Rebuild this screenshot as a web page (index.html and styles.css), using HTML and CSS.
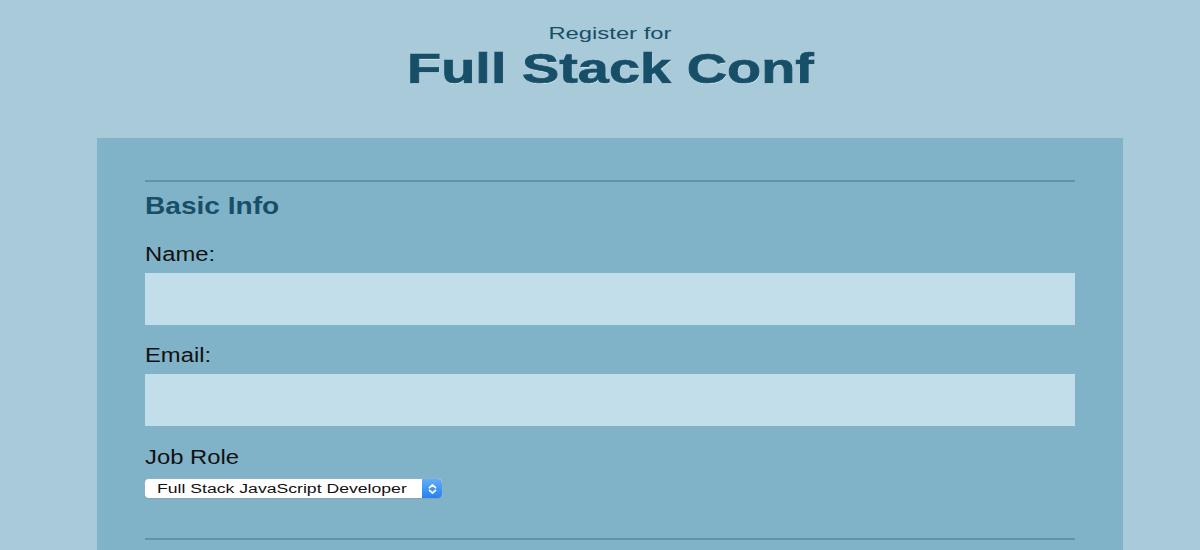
FILE: index.html
```html
<!DOCTYPE html>
<html>
<head>
<meta charset="utf-8">
<link rel="stylesheet" href="styles.css">
</head>
<body>
<header class="masthead">
  <span class="pre">Register for</span>
  <h1 class="title">Full Stack Conf</h1>
</header>
<form class="form">
  <fieldset class="section">
    <h2 class="legend"><span class="wide wide-legend">Basic Info</span></h2>
    <label class="label" for="name"><span class="wide wide-label">Name:</span></label>
    <input class="field" id="name" type="text">
    <label class="label" for="mail"><span class="wide wide-label">Email:</span></label>
    <input class="field" id="mail" type="email">
    <label class="label label-role" for="title"><span class="wide wide-label">Job Role</span></label>
    <div class="select" id="title" role="combobox" tabindex="0">
      <span class="select-text"><span class="wide wide-select">Full Stack JavaScript Developer</span></span>
      <span class="select-btn"><svg width="9" height="12" viewBox="0 0 9 12"><path d="M1.5 4.7 L4.5 2 L7.5 4.7 M1.5 7.3 L4.5 10 L7.5 7.3" fill="none" stroke="#fff" stroke-width="1.7" stroke-linecap="round" stroke-linejoin="round"/></svg></span>
    </div>
  </fieldset>
  <fieldset class="section"></fieldset>
</form>
</body>
</html>
```

FILE: styles.css
```css
html, body {
  margin: 0;
  padding: 0;
}
body {
  background: #a9cad8;
  font-family: "Liberation Sans", Arial, sans-serif;
  overflow: hidden;
}
.masthead {
  display: flex;
  flex-direction: column;
  align-items: center;
  box-sizing: border-box;
  padding: 25px 0 0 20px;
  height: 138px;
}
.pre {
  display: block;
  font-size: 17px;
  color: #184f68;
  line-height: 17px;
  transform: scaleX(1.4);
}
.title {
  margin: 5px 0 0;
  font-size: 43px;
  font-weight: 700;
  color: #184f68;
  line-height: 43px;
  transform: scaleX(1.3);
  -webkit-text-stroke: 0.7px #184f68;
  text-shadow: 0.5px 1px 0 rgba(255,255,255,0.55);
}
.form {
  margin: 0 77px 0 97px;
  background: #81b3c8;
  padding: 42px 48px 0;
  min-height: 420px;
}
.section {
  border: 0;
  border-top: 2px solid #5f93aa;
  margin: 0;
  padding: 0;
  display: flex;
  flex-direction: column;
  align-items: flex-start;
}
.wide {
  display: inline-block;
  transform-origin: left center;
}
.wide-legend { transform: scaleX(1.17); }
.wide-label { transform: scaleX(1.22); }
.wide-select { transform: scaleX(1.41); }
.legend {
  margin: 12px 0 0;
  font-size: 24px;
  font-weight: 700;
  color: #184f68;
  line-height: 24px;
}
.label {
  margin-top: 20px;
  font-size: 19.5px;
  color: #111;
  line-height: 20px;
}
.legend + .label {
  margin-top: 26px;
}
.label-role {
  margin-top: 21px;
}
.field {
  box-sizing: border-box;
  width: 100%;
  height: 52px;
  margin: 9px 0 0;
  border: 0;
  background: #c1deea;
  padding: 0 10px;
  font-size: 16px;
}
.select {
  display: flex;
  align-items: stretch;
  box-sizing: border-box;
  width: 297px;
  height: 19px;
  margin: 12px 0 40px;
  border-radius: 4px;
  background: #fff;
  box-shadow: 0 0 0 0.5px #9fb2bd, 0 1px 1px rgba(0,0,0,0.15);
}
.select-text {
  flex: 1;
  box-sizing: border-box;
  padding: 1px 0 0 12px;
  font-size: 12.5px;
  line-height: 19px;
  color: #111;
  overflow: hidden;
}
.select-btn {
  width: 20px;
  border-radius: 0 4px 4px 0;
  background: linear-gradient(#63adf8, #2381f0);
  display: flex;
  align-items: center;
  justify-content: center;
}
```
